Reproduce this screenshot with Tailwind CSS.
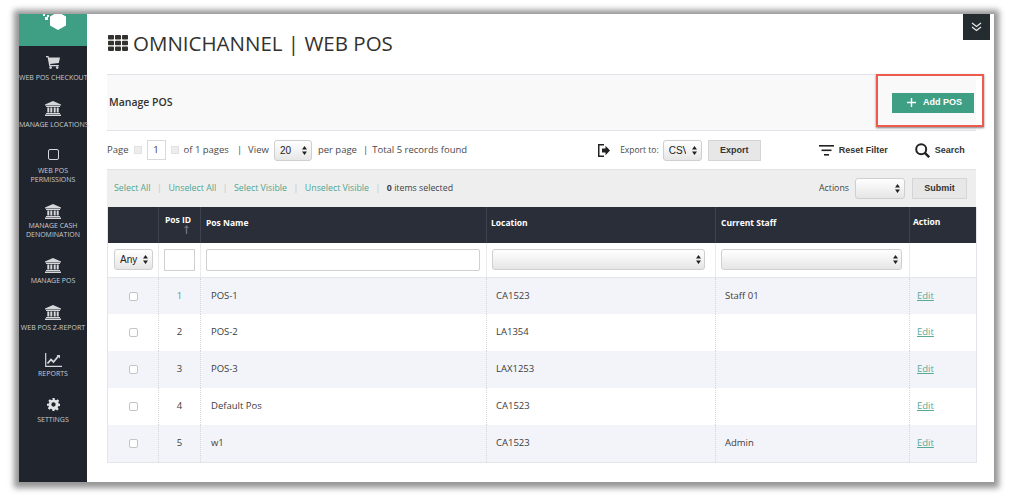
<!DOCTYPE html>
<html lang="en">
<head>
    <meta charset="UTF-8">
    <meta name="viewport" content="width=device-width, initial-scale=1.0">
    <title>Manage POS - Omnichannel Web POS</title>
    <script src="https://cdn.jsdelivr.net/npm/@tailwindcss/browser@4"></script>
</head>
<body class="bg-white h-[496px] overflow-hidden font-['Open_Sans',sans-serif] text-[#3a3a3a]">
    <div class="relative flex ml-[19px] mt-[14px] w-[975px] h-[468px] bg-white shadow-[0_1px_6px_5px_rgba(0,0,0,0.42)]">

        <!-- sidebar -->
        <aside class="w-[68px] shrink-0 bg-[#1f242d] text-[#c9ccd0] text-[7px] leading-[9px] font-medium text-center uppercase whitespace-nowrap">
            <div class="h-[32px] bg-[#3f9f85] overflow-hidden flex justify-center">
                <svg width="30" height="24" viewBox="0 0 30 24" fill="#fff"><path d="M20 -2l8 4.500 0 9-8 4.500-8-4.500 0-9z"/><rect x="5" y="0" width="2" height="2"/><rect x="9" y="1" width="2" height="2"/><rect x="7" y="3" width="3" height="3"/></svg>
            </div>
            <div class="h-[47px] pt-[10px]">
                <svg class="mx-auto mb-[4px] h-[13px] w-[14px]" viewBox="0 0 14 13" fill="#d5d7da"><path d="M0 0h2.500l.4 1.500H14l-1.200 5.600-8.600.8.200 1.100h8.400v1.200H3.300L1.600 1.200H0z"/><circle cx="4.600" cy="11.600" r="1.300"/><circle cx="11.200" cy="11.600" r="1.300"/></svg>
                <p>Web POS Checkout</p>
            </div>
            <div class="h-[47px] pt-[8px]">
                <svg class="mx-auto mb-[4px] h-[15px] w-[16px]" viewBox="0 0 16 15" fill="#d5d7da"><path d="M8 0l8 3.400v1H0v-1zM1 5h14v1H1zM2.300 6.500h2v5h-2zM5.300 6.500h2v5h-2zM8.700 6.500h2v5h-2zM11.700 6.500h2v5h-2zM1 12h14v1H1zM0 13.500h16V15H0z"/></svg>
                <p>Manage Locations</p>
            </div>
            <div class="h-[55px] pt-[9px]">
                <div class="mx-auto mb-[6px] h-[11px] w-[11px] rounded-[2px] border-[1.5px] border-[#d5d7da]"></div>
                <p>Web POS</p>
                <p>Permissions</p>
            </div>
            <div class="h-[56px] pt-[9px]">
                <svg class="mx-auto mb-[2px] h-[15px] w-[16px]" viewBox="0 0 16 15" fill="#d5d7da"><path d="M8 0l8 3.400v1H0v-1zM1 5h14v1H1zM2.300 6.500h2v5h-2zM5.300 6.500h2v5h-2zM8.700 6.500h2v5h-2zM11.700 6.500h2v5h-2zM1 12h14v1H1zM0 13.500h16V15H0z"/></svg>
                <p>Manage Cash</p>
                <p>Denomination</p>
            </div>
            <div class="h-[46px] pt-[7px]">
                <svg class="mx-auto mb-[3px] h-[15px] w-[16px]" viewBox="0 0 16 15" fill="#d5d7da"><path d="M8 0l8 3.400v1H0v-1zM1 5h14v1H1zM2.300 6.500h2v5h-2zM5.300 6.500h2v5h-2zM8.700 6.500h2v5h-2zM11.700 6.500h2v5h-2zM1 12h14v1H1zM0 13.500h16V15H0z"/></svg>
                <p>Manage POS</p>
            </div>
            <div class="h-[46px] pt-[8px]">
                <svg class="mx-auto mb-[3px] h-[15px] w-[16px]" viewBox="0 0 16 15" fill="#d5d7da"><path d="M8 0l8 3.400v1H0v-1zM1 5h14v1H1zM2.300 6.500h2v5h-2zM5.300 6.500h2v5h-2zM8.700 6.500h2v5h-2zM11.700 6.500h2v5h-2zM1 12h14v1H1zM0 13.500h16V15H0z"/></svg>
                <p>Web POS Z-Report</p>
            </div>
            <div class="h-[46px] pt-[10px]">
                <svg class="mx-auto mb-[2px] h-[14px] w-[17px]" viewBox="0 0 17 14" fill="none" stroke="#d5d7da"><path d="M.7 0v13.300H17" stroke-width="1.200"/><path d="M2.500 10.500l3.500-4 2.500 2.500 5-6" stroke-width="1.800"/><path d="M11.500 2h3.500v3.500z" fill="#d5d7da" stroke="none"/></svg>
                <p>Reports</p>
            </div>
            <div class="pt-[9px]">
                <svg class="mx-auto mb-[4px] h-[13px] w-[13px]" viewBox="0 0 24 24" fill="#e2e3e5"><path fill-rule="evenodd" d="M10 0h4l.6 3.300 2.300.9L19.700 2.300l2.800 2.800-1.900 2.800.9 2.300L24 10.800v3.900l-3.400.6-.9 2.200 1.900 2.800-2.800 2.800-2.800-1.900-2.300.9L14 24h-4l-.6-3.300-2.300-.9-2.800 1.900-2.800-2.800 1.900-2.800-.9-2.200L0 14.700v-3.900l3.500-.6.900-2.300-1.900-2.800 2.800-2.800 2.800 1.900 2.300-.9zM12 8a4 4 0 100 8 4 4 0 000-8z"/></svg>
                <p>Settings</p>
            </div>
        </aside>

        <!-- main -->
        <main class="flex-1 min-w-0 pl-[20px] pr-[18px]">
            <h1 class="h-[60px] pb-[2px] flex items-center gap-[5px] text-[20.500px] leading-none text-[#33322e]">
                <svg class="ml-px" width="20" height="16" viewBox="0 0 20 16" fill="#33322e"><rect width="6" height="4.500" rx=".8"/><rect x="7" width="6" height="4.500" rx=".8"/><rect x="14" width="6" height="4.500" rx=".8"/><rect y="5.700" width="6" height="4.500" rx=".8"/><rect x="7" y="5.700" width="6" height="4.500" rx=".8"/><rect x="14" y="5.700" width="6" height="4.500" rx=".8"/><rect y="11.400" width="6" height="4.500" rx=".8"/><rect x="7" y="11.400" width="6" height="4.500" rx=".8"/><rect x="14" y="11.400" width="6" height="4.500" rx=".8"/></svg>
                OMNICHANNEL | WEB POS
            </h1>

            <div class="h-[57px] flex items-center justify-between bg-[#f9f9f9] border-y border-[#e1e3e8] pl-[2px] pr-[2px]">
                <h2 class="text-[10.500px] font-semibold text-[#33322e]">Manage POS</h2>
                <button class="h-[20px] w-[82px] pl-[3px] flex items-center justify-center gap-[7px] bg-[#3f9f85] text-white text-[9px] font-bold font-['Liberation_Sans',sans-serif]">
                    <svg width="9" height="9" viewBox="0 0 9 9" fill="#fff"><path d="M3.800 0h1.400v3.800H9v1.400H5.200V9H3.800V5.200H0V3.800h3.800z"/></svg>
                    Add POS
                </button>
            </div>

            <!-- pager + export -->
            <div class="h-[38px] flex items-center whitespace-nowrap text-[9.500px] text-[#4a4a4a]">
                <span>Page</span>
                <span class="ml-[5px] h-[8px] w-[8px] bg-[#eceded] border border-[#e2e2e2]"></span>
                <span class="ml-[5px] h-[20px] w-[19px] flex items-center justify-center border border-[#d9d9d9] text-[9.500px] text-[#333]">1</span>
                <span class="ml-[5px] h-[8px] w-[8px] bg-[#eceded] border border-[#e2e2e2]"></span>
                <span class="ml-[5px]">of 1 pages</span>
                <span class="ml-[8px]">|</span>
                <span class="ml-[6px]">View</span>
                <div class="relative ml-[5px]">
                    <select class="appearance-none block h-[21px] w-[38px] pl-[5px] rounded-[3px] border border-[#cfcfcf] bg-linear-to-b from-white to-[#e6e6e6] text-[10px] text-[#222] font-['Liberation_Sans',sans-serif]"><option>20</option></select>
                    <svg class="absolute right-[5px] top-[6px] pointer-events-none" width="5" height="9" viewBox="0 0 5 9" fill="#222"><path d="M2.500 0L5 3.500H0zM2.500 9L0 5.500h5z"/></svg>
                </div>
                <span class="ml-[6px]">per page</span>
                <span class="ml-[6px]">|</span>
                <span class="ml-[4px]">Total 5 records found</span>

                <svg class="ml-[131px]" width="12" height="13" viewBox="0 0 12 13" fill="#222"><path d="M0 0h6v1.500H1.500v10H6V13H0z"/><path d="M4 4.500h3.500V1.800L12 6.500l-4.500 4.700V8.500H4z"/></svg>
                <span class="ml-[10px] text-[8.500px]">Export to:</span>
                <div class="relative ml-[4px]">
                    <select class="appearance-none block h-[21px] w-[39px] pl-[5px] pr-[15px] rounded-[3px] border border-[#cfcfcf] bg-linear-to-b from-white to-[#e6e6e6] text-[10px] text-[#222] font-['Liberation_Sans',sans-serif]"><option>CSV</option></select>
                    <svg class="absolute right-[5px] top-[6px] pointer-events-none" width="5" height="9" viewBox="0 0 5 9" fill="#222"><path d="M2.500 0L5 3.500H0zM2.500 9L0 5.500h5z"/></svg>
                </div>
                <button class="ml-[6px] mt-[1px] h-[21px] w-[53px] bg-[#e7e7e7] border border-[#d5d5d5] text-[9px] font-bold text-[#333] font-['Liberation_Sans',sans-serif]">Export</button>

                <svg class="ml-[58px]" width="15" height="11" viewBox="0 0 15 11" fill="#222"><rect width="15" height="1.600"/><rect x="2.500" y="4.500" width="10" height="1.600"/><rect x="5" y="9" width="5" height="1.600"/></svg>
                <span class="ml-[5px] mt-[1px] text-[9px] font-bold text-[#333] font-['Liberation_Sans',sans-serif]">Reset Filter</span>
                <svg class="ml-[27px]" width="15" height="15" viewBox="0 0 15 15" fill="none" stroke="#222" stroke-width="2"><circle cx="6.200" cy="6.200" r="5"/><path d="M9.800 9.800L14.200 14.200" stroke-width="2.400"/></svg>
                <span class="ml-[5px] mt-[1px] text-[9px] font-bold text-[#333] font-['Liberation_Sans',sans-serif]">Search</span>
            </div>

            <!-- mass actions -->
            <div class="h-[38px] flex items-center whitespace-nowrap bg-[#eeeeee] border-t border-[#e2e3e6] pl-[7px] pr-[9px] text-[8.800px] text-[#c4c4c4]">
                <a class="text-[#4fa690]">Select All</a>
                <span class="mx-[6.500px]">|</span>
                <a class="text-[#4fa690]">Unselect All</a>
                <span class="mx-[6.500px]">|</span>
                <a class="text-[#4fa690]">Select Visible</a>
                <span class="mx-[6.500px]">|</span>
                <a class="text-[#4fa690]">Unselect Visible</a>
                <span class="mx-[6.500px]">|</span>
                <span class="text-[#444]"><b>0</b> items selected</span>
                <span class="ml-auto text-[#444]">Actions</span>
                <div class="relative ml-[6px]">
                    <select class="appearance-none block h-[21px] w-[50px] rounded-[3px] border border-[#cfcfcf] bg-linear-to-b from-white to-[#e6e6e6]"></select>
                    <svg class="absolute right-[5px] top-[6px] pointer-events-none" width="5" height="9" viewBox="0 0 5 9" fill="#222"><path d="M2.500 0L5 3.500H0zM2.500 9L0 5.500h5z"/></svg>
                </div>
                <button class="ml-[7px] h-[21px] w-[55px] bg-[#e7e7e7] border border-[#d5d5d5] text-[9px] font-bold text-[#333] font-['Liberation_Sans',sans-serif]">Submit</button>
            </div>

            <!-- grid -->
            <table class="w-[869px] table-fixed border-collapse text-[9.500px] border-x border-b border-[#e3e5ea]">
                <colgroup>
                    <col class="w-[51px]"><col class="w-[42px]"><col class="w-[286px]"><col class="w-[229px]"><col class="w-[194px]"><col class="w-[67px]">
                </colgroup>
                <thead>
                    <tr class="h-[36px] bg-[#2a2e39] text-white text-[8.500px] font-bold text-left">
                        <th class="border-r border-[#3d424e]"></th>
                        <th class="border-r border-[#3d424e] pl-[6px] align-top pt-[7px] leading-[11px]">Pos ID<svg class="ml-[19px]" width="5" height="9" viewBox="0 0 5 9" fill="#68707d"><path d="M2.500 0L5 3H3.200v6H1.800V3H0z"/></svg></th>
                        <th class="border-r border-[#3d424e] pl-[5px] pb-[3px]">Pos Name</th>
                        <th class="border-r border-[#3d424e] pl-[4px] pb-[3px]">Location</th>
                        <th class="border-r border-[#3d424e] pl-[5px] pb-[3px]">Current Staff</th>
                        <th class="pl-[3px] align-top pt-[9px]">Action</th>
                    </tr>
                    <tr class="h-[34px] border-b border-[#e3e5ea]">
                        <td class="border-r border-[#e9eaee] pl-[6px]">
                            <div class="relative w-[39px]">
                                <select class="appearance-none block h-[21px] w-[39px] pl-[5px] rounded-[3px] border border-[#cfcfcf] bg-linear-to-b from-white to-[#e6e6e6] text-[10px] text-[#222] font-['Liberation_Sans',sans-serif]"><option>Any</option></select>
                                <svg class="absolute right-[5px] top-[6px] pointer-events-none" width="5" height="9" viewBox="0 0 5 9" fill="#222"><path d="M2.500 0L5 3.500H0zM2.500 9L0 5.500h5z"/></svg>
                            </div>
                        </td>
                        <td class="border-r border-[#e9eaee] pl-[5px]"><input class="block h-[22px] w-[31px] border border-[#d0d0d0]"></td>
                        <td class="border-r border-[#e9eaee] pl-[5px]"><input class="block h-[22px] w-[274px] rounded-[2px] border border-[#d0d0d0]"></td>
                        <td class="border-r border-[#e9eaee] pl-[5px]">
                            <div class="relative w-[213px]">
                                <select class="appearance-none block h-[21px] w-[213px] rounded-[3px] border border-[#cfcfcf] bg-linear-to-b from-white to-[#e6e6e6]"></select>
                                <svg class="absolute right-[4px] top-[6px] pointer-events-none" width="5" height="9" viewBox="0 0 5 9" fill="#222"><path d="M2.500 0L5 3.500H0zM2.500 9L0 5.500h5z"/></svg>
                            </div>
                        </td>
                        <td class="border-r border-[#e9eaee] pl-[5px]">
                            <div class="relative w-[181px]">
                                <select class="appearance-none block h-[21px] w-[181px] rounded-[3px] border border-[#cfcfcf] bg-linear-to-b from-white to-[#e6e6e6]"></select>
                                <svg class="absolute right-[4px] top-[6px] pointer-events-none" width="5" height="9" viewBox="0 0 5 9" fill="#222"><path d="M2.500 0L5 3.500H0zM2.500 9L0 5.500h5z"/></svg>
                            </div>
                        </td>
                        <td></td>
                    </tr>
                </thead>
                <tbody class="text-[#3c3c3c]">
                    <tr class="h-[37px] bg-[#f3f4fa]">
                        <td class="border-r border-dotted border-[#d5d6da] text-center"><input type="checkbox" class="appearance-none align-middle h-[9px] w-[9px] bg-white border border-[#c4c4c4] rounded-[2px]"></td>
                        <td class="border-r border-dotted border-[#d5d6da] text-center text-[#47a08a]">1</td>
                        <td class="border-r border-dotted border-[#d5d6da] pl-[10px]">POS-1</td>
                        <td class="border-r border-dotted border-[#d5d6da] pl-[9px]">CA1523</td>
                        <td class="border-r border-dotted border-[#d5d6da] pl-[9px]">Staff 01</td>
                        <td class="pl-[7px]"><a class="text-[#5aa995] underline">Edit</a></td>
                    </tr>
                    <tr class="h-[37px]">
                        <td class="border-r border-dotted border-[#d5d6da] text-center"><input type="checkbox" class="appearance-none align-middle h-[9px] w-[9px] bg-white border border-[#c4c4c4] rounded-[2px]"></td>
                        <td class="border-r border-dotted border-[#d5d6da] text-center">2</td>
                        <td class="border-r border-dotted border-[#d5d6da] pl-[10px]">POS-2</td>
                        <td class="border-r border-dotted border-[#d5d6da] pl-[9px]">LA1354</td>
                        <td class="border-r border-dotted border-[#d5d6da] pl-[9px]"></td>
                        <td class="pl-[7px]"><a class="text-[#5aa995] underline">Edit</a></td>
                    </tr>
                    <tr class="h-[37px] bg-[#f3f4fa]">
                        <td class="border-r border-dotted border-[#d5d6da] text-center"><input type="checkbox" class="appearance-none align-middle h-[9px] w-[9px] bg-white border border-[#c4c4c4] rounded-[2px]"></td>
                        <td class="border-r border-dotted border-[#d5d6da] text-center">3</td>
                        <td class="border-r border-dotted border-[#d5d6da] pl-[10px]">POS-3</td>
                        <td class="border-r border-dotted border-[#d5d6da] pl-[9px]">LAX1253</td>
                        <td class="border-r border-dotted border-[#d5d6da] pl-[9px]"></td>
                        <td class="pl-[7px]"><a class="text-[#5aa995] underline">Edit</a></td>
                    </tr>
                    <tr class="h-[37px]">
                        <td class="border-r border-dotted border-[#d5d6da] text-center"><input type="checkbox" class="appearance-none align-middle h-[9px] w-[9px] bg-white border border-[#c4c4c4] rounded-[2px]"></td>
                        <td class="border-r border-dotted border-[#d5d6da] text-center">4</td>
                        <td class="border-r border-dotted border-[#d5d6da] pl-[10px]">Default Pos</td>
                        <td class="border-r border-dotted border-[#d5d6da] pl-[9px]">CA1523</td>
                        <td class="border-r border-dotted border-[#d5d6da] pl-[9px]"></td>
                        <td class="pl-[7px]"><a class="text-[#5aa995] underline">Edit</a></td>
                    </tr>
                    <tr class="h-[37px] bg-[#f3f4fa]">
                        <td class="border-r border-dotted border-[#d5d6da] text-center"><input type="checkbox" class="appearance-none align-middle h-[9px] w-[9px] bg-white border border-[#c4c4c4] rounded-[2px]"></td>
                        <td class="border-r border-dotted border-[#d5d6da] text-center">5</td>
                        <td class="border-r border-dotted border-[#d5d6da] pl-[10px]">w1</td>
                        <td class="border-r border-dotted border-[#d5d6da] pl-[9px]">CA1523</td>
                        <td class="border-r border-dotted border-[#d5d6da] pl-[9px]">Admin</td>
                        <td class="pl-[7px]"><a class="text-[#5aa995] underline">Edit</a></td>
                    </tr>
                </tbody>
            </table>
        </main>

        <!-- toggle + annotation sit over the page -->
        <div class="absolute right-[4px] top-0 h-[26px] w-[27px] flex items-center justify-center bg-[#252c30]">
            <svg width="11" height="10" viewBox="0 0 11 10" fill="none" stroke="#e6e8e8" stroke-width="1.300"><path d="M1 1l4.500 3.500L10 1M1 5l4.500 3.500L10 5"/></svg>
        </div>
        <div class="absolute left-[857px] top-[60px] h-[53px] w-[108px] border-[2px] border-[#ee5a4e] shadow-[0_1px_2px_rgba(0,0,0,0.5)]"></div>
    </div>
</body>
</html>
